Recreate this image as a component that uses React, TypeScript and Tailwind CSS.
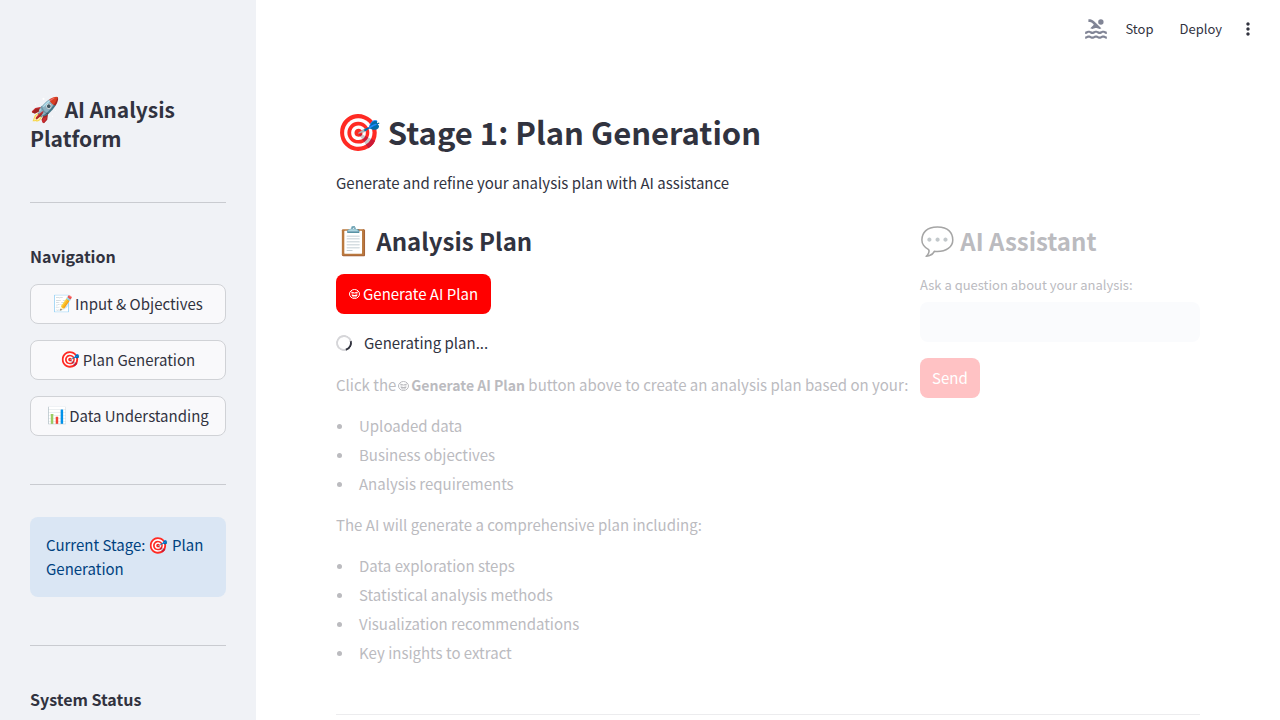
import type { ReactNode } from "react";
import { MdMoreVert, MdPool } from "react-icons/md";

function Emoji({ children, className }: { children: ReactNode; className: string }) {
  return (
    <span
      aria-hidden="true"
      className={`inline-block font-['Noto_Color_Emoji','Noto_Sans'] font-normal leading-none ${className}`}
    >
      {children}
    </span>
  );
}

function FaceIcon({ className = "" }: { className?: string }) {
  return (
    <svg
      aria-hidden="true"
      viewBox="0 0 22 20"
      className={`inline-block h-[10px] w-[11px] align-baseline ${className}`}
      fill="none"
      stroke="currentColor"
      strokeWidth="2"
    >
      <ellipse cx="11" cy="10" rx="10" ry="9" />
      <path d="M4 6 11 8 18 6" />
      <path d="M5 10h4M13 10h4M6 13c2 4 8 4 10 0Z" />
    </svg>
  );
}

const navItems = [
  { icon: "📝", label: "Input & Objectives" },
  { icon: "🎯", label: "Plan Generation" },
  { icon: "📊", label: "Data Understanding" },
];

const inputs = ["Uploaded data", "Business objectives", "Analysis requirements"];
const outputs = [
  "Data exploration steps",
  "Statistical analysis methods",
  "Visualization recommendations",
  "Key insights to extract",
];

function BulletList({ items }: { items: string[] }) {
  return (
    <ul className="flex flex-col gap-[5px]">
      {items.map((item) => (
        <li key={item} className="flex items-center">
          <span aria-hidden="true" className="ml-px mr-[17px] size-[5px] rounded-full bg-current" />
          {item}
        </li>
      ))}
    </ul>
  );
}

function Sidebar() {
  return (
    <aside className="w-64 shrink-0 overflow-hidden bg-[#f0f2f6] px-[30px] pt-[95px]">
      <h1 className="text-[21px] font-bold leading-[29px]">
        <Emoji className="text-[24px]">🚀</Emoji> AI Analysis Platform
      </h1>
      <hr className="mt-[49px] border-[#c9cbd0]" />
      <h3 className="mt-[41px] text-[16px] font-bold leading-6">Navigation</h3>
      <nav className="mt-4 flex flex-col gap-4">
        {navItems.map(({ icon, label }) => (
          <button
            key={label}
            type="button"
            className="flex h-10 items-center justify-center gap-[2px] whitespace-nowrap rounded-lg border border-[#d0d2d6] bg-[#f9f9fb]"
          >
            <Emoji className="text-[16px]">{icon}</Emoji>
            {label}
          </button>
        ))}
      </nav>
      <hr className="mt-12 border-[#c9cbd0]" />
      <p className="mt-8 rounded-lg bg-[#dae6f4] p-4 text-[#004280]">
        Current Stage: <Emoji className="text-[16px]">🎯</Emoji> Plan Generation
      </p>
      <hr className="mt-12 border-[#c9cbd0]" />
      <h3 className="mt-[41px] text-[16px] font-bold leading-6">System Status</h3>
    </aside>
  );
}

export default function App() {
  return (
    <div className="flex h-screen overflow-hidden bg-white font-['Noto_Sans_CJK_SC','Noto_Color_Emoji',sans-serif] text-[15px] leading-6 text-[#31333f]">
      <Sidebar />
      <div className="min-w-0 flex-1">
        <header className="flex h-[58px] items-center justify-end pr-[22px] text-[13px]">
          <MdPool aria-hidden="true" className="mr-4 size-[26px] text-[#808495]" />
          <button type="button" className="mr-[26px]">Stop</button>
          <button type="button" className="mr-4">Deploy</button>
          <button type="button" aria-label="More options">
            <MdMoreVert className="size-5" />
          </button>
        </header>
        <main className="px-20 pt-[52px]">
          <h1 className="text-[31px] font-bold leading-[43px]">
            <Emoji className="text-[36px]">🎯</Emoji> Stage 1: Plan Generation
          </h1>
          <p className="mt-[18px]">Generate and refine your analysis plan with AI assistance</p>
          <div className="mt-[29px] flex gap-4">
            <section className="min-w-0 flex-1">
              <h2 className="text-[24px] font-bold leading-[34px]">
                <Emoji className="text-[28px]">📋</Emoji> Analysis Plan
              </h2>
              <button
                type="button"
                className="mt-4 flex h-10 items-center gap-[3px] whitespace-nowrap rounded-lg bg-[#ff0000] px-[13px] text-white"
              >
                <FaceIcon />
                Generate AI Plan
              </button>
              <div role="status" className="mt-[17px] flex items-center gap-3">
                <span className="size-4 rotate-30 rounded-full border-2 border-[#d6d6d9] border-r-[#31333f]" />
                Generating plan...
              </div>
              <div className="mt-[18px] text-[#bbbbbf]">
                <p className="mb-[17px] whitespace-nowrap">
                  Click the
                  <FaceIcon className="mx-[2px]" />
                  <strong className="text-[14px]">Generate AI Plan</strong> button above to create an analysis plan
                  based on your:
                </p>
                <BulletList items={inputs} />
                <p className="my-[17px]">The AI will generate a comprehensive plan including:</p>
                <BulletList items={outputs} />
              </div>
            </section>
            <section className="w-[280px] shrink-0 text-[#bbbbbf]">
              <h2 className="text-[24px] font-bold leading-[34px]">
                <Emoji className="text-[28px] opacity-35">💬</Emoji> AI Assistant
              </h2>
              <label htmlFor="question" className="mt-[15px] block text-[13px]">
                Ask a question about your analysis:
              </label>
              <input id="question" type="text" className="mt-[5px] block h-10 w-full rounded-lg bg-[#fafbfd] px-3" />
              <button type="button" className="mt-4 h-10 rounded-lg bg-[#ffc2c4] px-3 text-white">
                Send
              </button>
            </section>
          </div>
          <hr className="mt-[49px] border-[#ececee]" />
        </main>
      </div>
    </div>
  );
}
